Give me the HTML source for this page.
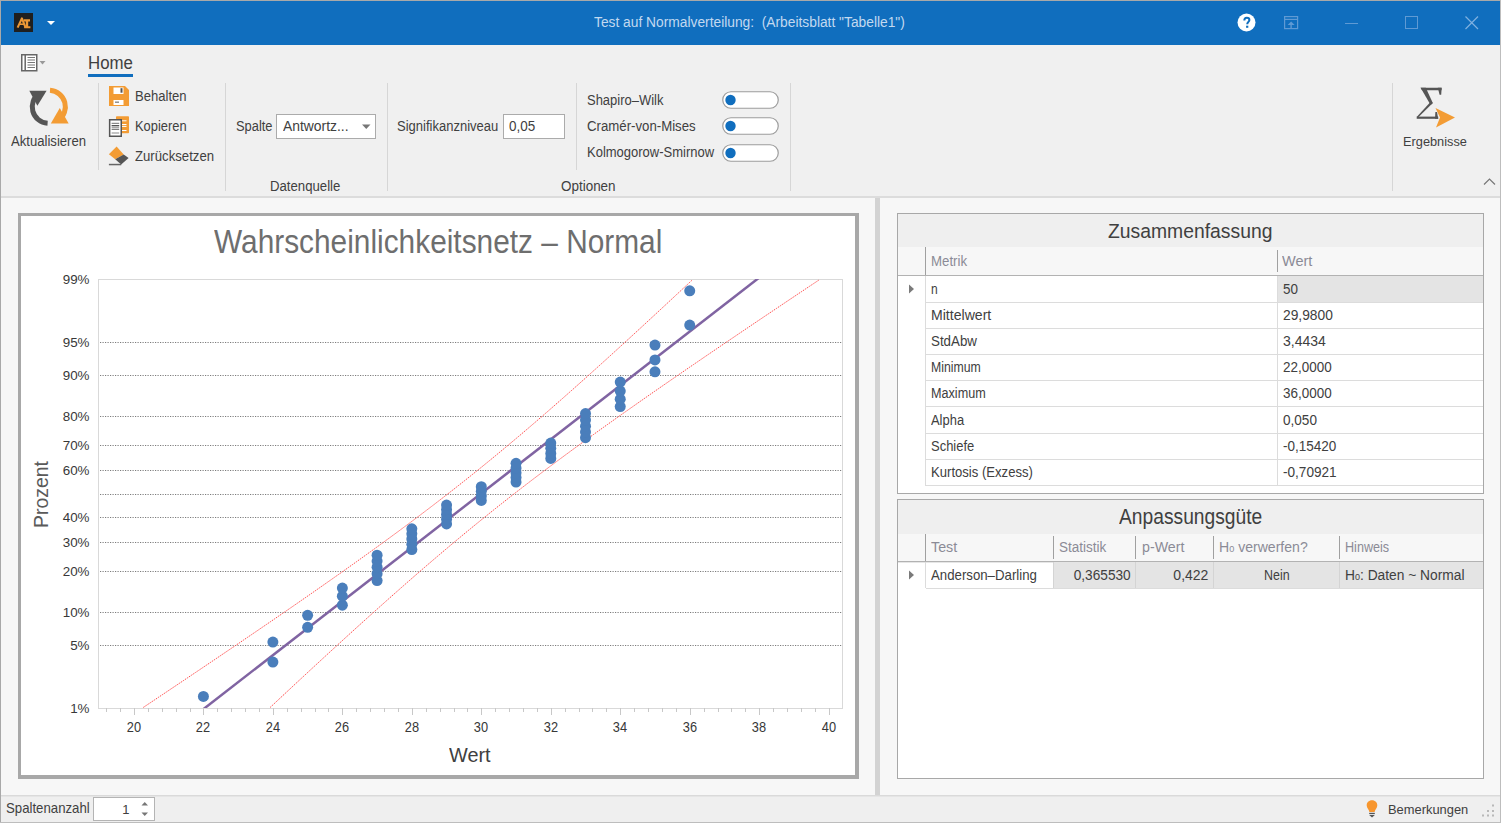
<!DOCTYPE html>
<html><head><meta charset="utf-8"><title>Test auf Normalverteilung</title>
<style>
html,body{margin:0;padding:0;width:1501px;height:823px;overflow:hidden;background:#f7f7f7}
body{position:relative;font-family:"Liberation Sans", sans-serif}
.r{position:absolute;display:block}
.t{position:absolute;white-space:pre;line-height:normal;font-family:"Liberation Sans", sans-serif}
</style></head><body>
<div class="r" style="left:0px;top:0px;width:1501px;height:823px;background:#f7f7f7"></div>
<div class="r" style="left:0px;top:0px;width:1501px;height:45px;background:#106ebe"></div>
<div class="r" style="left:0px;top:0px;width:1501px;height:1px;background:#a9a9a9"></div>
<div class="r" style="left:0px;top:45px;width:1501px;height:151px;background:#f0f0f0"></div>
<div class="r" style="left:0px;top:196px;width:1501px;height:2px;background:#dcdcdc"></div>
<div class="r" style="left:0px;top:795px;width:1501px;height:1px;background:#dadada"></div>
<div class="r" style="left:0px;top:796px;width:1501px;height:1px;background:#e5e5e5"></div>
<div class="r" style="left:0px;top:797px;width:1501px;height:26px;background:#efefef"></div>
<div class="r" style="left:0px;top:0px;width:1px;height:823px;background:#a9a9a9"></div>
<div class="r" style="left:1500px;top:0px;width:1px;height:823px;background:#bdbdbd"></div>
<div class="r" style="left:0px;top:822px;width:1501px;height:1px;background:#bdbdbd"></div>
<svg class="r" style="left:14px;top:13px" width="19" height="19" viewBox="0 0 19 19">
<rect x="0" y="0" width="19" height="19" fill="#1f1f1f"/>
<g fill="none" stroke="#ec9836" stroke-width="2.1" stroke-linejoin="round">
<path d="M3.6 14.6 L7.9 5.4 L11.6 14.6"/>
<path d="M5.4 11.2 H10.2" stroke-width="1.6"/>
<path d="M9.8 7.4 H16 M10.2 14.3 H16.4"/>
<path d="M13 7.4 V14.3" stroke-width="2.4"/>
</g></svg>
<svg class="r" style="left:46px;top:20px" width="10" height="6"><path d="M1 1 H9 L5 5 Z" fill="#fff"/></svg>
<div class="t" style="left:594px;top:14.00px;font-size:14.25px;color:#c2d9f0;transform-origin:0 0;transform:scaleX(0.9671);">Test auf Normalverteilung:&nbsp; (Arbeitsblatt "Tabelle1")</div>
<svg class="r" style="left:1237px;top:13px" width="19" height="19" viewBox="0 0 19 19">
<circle cx="9.5" cy="9.5" r="9" fill="#fff"/>
<path d="M7.3 7.6 C7.3 5.4 8.4 4.7 9.8 4.7 C11.3 4.7 12.4 5.6 12.4 7 C12.4 8.8 10.2 9.1 10.2 11.3" fill="none" stroke="#106ebe" stroke-width="2"/>
<rect x="9.1" y="12.7" width="2.2" height="2.1" fill="#106ebe"/>
</svg>
<svg class="r" style="left:1284px;top:16px" width="16" height="14" viewBox="0 0 16 14">
<g fill="none" stroke="#5f9ad4" stroke-width="1.2">
<rect x="0.6" y="0.6" width="13" height="12"/>
<path d="M0.6 3.4 H13.6"/>
</g>
<path d="M3.6 9 L7.1 5.6 L10.6 9 Z" fill="#5f9ad4"/>
<rect x="6.4" y="8" width="1.4" height="4.4" fill="#5f9ad4"/>
</svg>
<div class="r" style="left:1345px;top:23px;width:13px;height:1px;background:#5f9ad4"></div>
<svg class="r" style="left:1405px;top:16px" width="14" height="14"><rect x="0.5" y="0.5" width="12" height="12" fill="none" stroke="#5f9ad4"/></svg>
<svg class="r" style="left:1464px;top:15px" width="16" height="16"><path d="M1.5 1.5 L14 14 M14 1.5 L1.5 14" stroke="#7fb0e0" stroke-width="1.2"/></svg>
<svg class="r" style="left:20px;top:53px" width="28" height="20" viewBox="0 0 28 20">
<rect x="1.75" y="1.75" width="15" height="16" fill="#fff" stroke="#666" stroke-width="1.5"/>
<path d="M5.2 2 V17.5" stroke="#666" stroke-width="1.5"/>
<path d="M7.5 4.5 H15 M7.5 7 H15 M7.5 9.5 H15 M7.5 12 H15 M7.5 14.5 H15" stroke="#777" stroke-width="1.2"/>
<path d="M19.5 8 H25.5 L22.5 11.5 Z" fill="#999"/>
</svg>
<div class="t" style="left:87.7px;top:53.00px;font-size:17.61px;color:#404040;transform-origin:0 0;transform:scaleX(0.9560);">Home</div>
<div class="r" style="left:88px;top:74px;width:45px;height:3px;background:#106ebe"></div>
<svg class="r" style="left:27px;top:86px" width="44" height="42" viewBox="0 0 44 42">
<path d="M20.6 37.3 A16.5 16.5 0 0 1 12.3 7.3" fill="none" stroke="#555" stroke-width="5"/>
<path d="M2.3 4.7 L19.6 4.7 L10.4 19.8 Z" fill="#555"/>
<path d="M23 4.3 A16.5 16.5 0 0 1 31.3 34.3" fill="none" stroke="#f39c34" stroke-width="5"/>
<path d="M23.8 37.4 L41.7 37.4 L32.8 22 Z" fill="#f39c34"/>
</svg>
<div class="t" style="left:11.1px;top:133.00px;font-size:13.91px;color:#404040;transform-origin:0 0;transform:scaleX(0.9430);">Aktualisieren</div>
<div class="r" style="left:98px;top:83px;width:1px;height:87px;background:#d6d6d6"></div>
<svg class="r" style="left:109px;top:86px" width="20" height="20" viewBox="0 0 20 20">
<path d="M0 0 H16 L20 4 V20 H0 Z" fill="#f39c34"/>
<rect x="4.5" y="1.5" width="10" height="6.5" fill="#fff"/>
<rect x="11.5" y="2.2" width="2" height="4.5" fill="#555"/>
<rect x="4.5" y="14" width="10" height="5" fill="#fff"/>
<rect x="6" y="15.5" width="4" height="1.4" fill="#888"/>
</svg>
<div class="t" style="left:134.8px;top:88.00px;font-size:13.91px;color:#404040;transform-origin:0 0;transform:scaleX(0.9396);">Behalten</div>
<svg class="r" style="left:108px;top:115px" width="22" height="23" viewBox="0 0 22 23">
<rect x="8" y="1.2" width="13" height="17" rx="0.8" fill="#f39c34"/>
<path d="M13.6 5.8 H18.5 M13.6 9.5 H18.5 M13.6 11.4 H18.5 M13.6 15.5 H18.5" stroke="#fff" stroke-width="1"/>
<rect x="1.65" y="4.75" width="11.6" height="16.5" fill="#fff" stroke="#555" stroke-width="1.5"/>
<path d="M3.6 8.4 H11.2 M3.6 12.2 H11.2 M3.6 18 H11.2" stroke="#8a8a8a" stroke-width="1.1"/>
<path d="M3.6 10.6 H11.2 M3.6 14.3 H11.2" stroke="#555" stroke-width="1.1"/>
</svg>
<div class="t" style="left:134.8px;top:118.00px;font-size:13.91px;color:#404040;transform-origin:0 0;transform:scaleX(0.9267);">Kopieren</div>
<svg class="r" style="left:108px;top:145px" width="22" height="21" viewBox="0 0 22 21">
<path d="M8.6 1.5 L0.9 9.3 L7.2 14.2 L15.7 9.6 Z" fill="#f39c34"/>
<path d="M7.2 14.2 L15.7 9.6 L20.6 13.1 L13.2 19.5 Z" fill="#555"/>
<rect x="0.9" y="18.8" width="12.3" height="1.5" fill="#666"/>
</svg>
<div class="t" style="left:134.8px;top:148.00px;font-size:13.91px;color:#404040;transform-origin:0 0;transform:scaleX(0.9474);">Zurücksetzen</div>
<div class="r" style="left:225px;top:83px;width:1px;height:108px;background:#d6d6d6"></div>
<div class="t" style="left:236px;top:118.00px;font-size:13.91px;color:#404040;transform-origin:0 0;transform:scaleX(0.9254);">Spalte</div>
<div class="r" style="left:276px;top:114px;width:100px;height:25px;background:#fff;border:1px solid #ababab;box-sizing:border-box"></div>
<div class="t" style="left:282.7px;top:118.00px;font-size:13.91px;color:#404040;transform-origin:0 0;transform:scaleX(0.9984);">Antwortz...</div>
<svg class="r" style="left:362px;top:124px" width="9" height="6"><path d="M0 0.5 H8.5 L4.25 5 Z" fill="#777"/></svg>
<div class="t" style="left:269.8px;top:178.00px;font-size:13.91px;color:#404040;transform-origin:0 0;transform:scaleX(0.9482);">Datenquelle</div>
<div class="r" style="left:387px;top:83px;width:1px;height:108px;background:#d6d6d6"></div>
<div class="t" style="left:397.4px;top:118.00px;font-size:13.91px;color:#404040;transform-origin:0 0;transform:scaleX(0.9357);">Signifikanzniveau</div>
<div class="r" style="left:503px;top:114px;width:62px;height:25px;background:#fff;border:1px solid #ababab;box-sizing:border-box"></div>
<div class="t" style="left:508.9px;top:118.00px;font-size:13.91px;color:#404040;transform-origin:0 0;transform:scaleX(0.9677);">0,05</div>
<div class="r" style="left:576px;top:83px;width:1px;height:87px;background:#d6d6d6"></div>
<div class="t" style="left:587px;top:92.00px;font-size:13.91px;color:#404040;transform-origin:0 0;transform:scaleX(0.9323);">Shapiro–Wilk</div>
<div class="t" style="left:587px;top:118.00px;font-size:13.91px;color:#404040;transform-origin:0 0;transform:scaleX(0.9503);">Cramér-von-Mises</div>
<div class="t" style="left:587px;top:144.00px;font-size:13.91px;color:#404040;transform-origin:0 0;transform:scaleX(0.9342);">Kolmogorow-Smirnow</div>
<svg class="r" style="left:722px;top:91px" width="57" height="18" viewBox="0 0 57 18">
<rect x="0.75" y="0.75" width="55.5" height="16.5" rx="8.25" fill="#fff" stroke="#9c9c9c" stroke-width="1.2"/>
<circle cx="8.5" cy="9" r="5.2" fill="#106ebe"/></svg>
<svg class="r" style="left:722px;top:117px" width="57" height="18" viewBox="0 0 57 18">
<rect x="0.75" y="0.75" width="55.5" height="16.5" rx="8.25" fill="#fff" stroke="#9c9c9c" stroke-width="1.2"/>
<circle cx="8.5" cy="9" r="5.2" fill="#106ebe"/></svg>
<svg class="r" style="left:722px;top:144px" width="57" height="18" viewBox="0 0 57 18">
<rect x="0.75" y="0.75" width="55.5" height="16.5" rx="8.25" fill="#fff" stroke="#9c9c9c" stroke-width="1.2"/>
<circle cx="8.5" cy="9" r="5.2" fill="#106ebe"/></svg>
<div class="t" style="left:560.6px;top:178.00px;font-size:13.91px;color:#404040;transform-origin:0 0;transform:scaleX(0.9671);">Optionen</div>
<div class="r" style="left:790px;top:83px;width:1px;height:108px;background:#d6d6d6"></div>
<div class="r" style="left:1392px;top:83px;width:1px;height:108px;background:#d6d6d6"></div>
<svg class="r" style="left:1414px;top:86px" width="30" height="36" viewBox="0 0 30 36" fill="#555">
<path d="M6.6 1.8 H27.6 V4.3 H8 Z"/>
<path d="M23.8 1.8 H27.6 L27.2 8.8 H25.6 Z"/>
<path d="M6.6 1.8 H11.8 L18.8 16.9 L16.6 18.9 Z"/>
<path d="M16.9 15.4 L18.8 16.9 L4.6 30.9 H2.7 Z"/>
<path d="M2.7 30.6 H24.2 V32.8 H2.7 Z"/>
<path d="M21.4 26 H23 L24.2 32.8 H21 Z"/>
</svg>
<svg class="r" style="left:1434px;top:107px" width="22" height="21" viewBox="0 0 22 21"><path d="M1.5 1 L21 10.5 L2 20.5 L6 10.5 Z" fill="#f39c34"/></svg>
<div class="t" style="left:1402.8px;top:134.00px;font-size:13.70px;color:#404040;transform-origin:0 0;transform:scaleX(0.9340);">Ergebnisse</div>
<svg class="r" style="left:1483px;top:177px" width="13" height="9"><path d="M1 7.5 L6.5 2 L12 7.5" fill="none" stroke="#777" stroke-width="1.2"/></svg>
<div class="r" style="left:875px;top:198px;width:5px;height:597px;background:#d3d3d3"></div>
<div class="r" style="left:18px;top:213px;width:841px;height:566px;background:#fff;border:3px solid #a8a8a8;border-right-width:4px;border-bottom-width:4px;box-sizing:border-box"></div>
<div class="t" style="left:213.6px;top:224.00px;font-size:32.41px;color:#6e6e6e;transform-origin:0 0;transform:scaleX(0.9208);">Wahrscheinlichkeitsnetz – Normal</div>
<svg class="r" style="left:0;top:0" width="1501" height="823"><clipPath id="pc"><rect x="98" y="279" width="744" height="429"/></clipPath><rect x="98.5" y="279.5" width="744" height="429" fill="none" stroke="#d9d9d9" stroke-width="1"/><line x1="100" y1="342.5" x2="842" y2="342.5" stroke="#7c7c7c" stroke-width="1" stroke-dasharray="1.2 1.3"/><line x1="100" y1="375.5" x2="842" y2="375.5" stroke="#7c7c7c" stroke-width="1" stroke-dasharray="1.2 1.3"/><line x1="100" y1="416.5" x2="842" y2="416.5" stroke="#7c7c7c" stroke-width="1" stroke-dasharray="1.2 1.3"/><line x1="100" y1="445.5" x2="842" y2="445.5" stroke="#7c7c7c" stroke-width="1" stroke-dasharray="1.2 1.3"/><line x1="100" y1="470.5" x2="842" y2="470.5" stroke="#7c7c7c" stroke-width="1" stroke-dasharray="1.2 1.3"/><line x1="100" y1="494.5" x2="842" y2="494.5" stroke="#7c7c7c" stroke-width="1" stroke-dasharray="1.2 1.3"/><line x1="100" y1="517.5" x2="842" y2="517.5" stroke="#7c7c7c" stroke-width="1" stroke-dasharray="1.2 1.3"/><line x1="100" y1="542.5" x2="842" y2="542.5" stroke="#7c7c7c" stroke-width="1" stroke-dasharray="1.2 1.3"/><line x1="100" y1="571.5" x2="842" y2="571.5" stroke="#7c7c7c" stroke-width="1" stroke-dasharray="1.2 1.3"/><line x1="100" y1="612.5" x2="842" y2="612.5" stroke="#7c7c7c" stroke-width="1" stroke-dasharray="1.2 1.3"/><line x1="100" y1="645.5" x2="842" y2="645.5" stroke="#7c7c7c" stroke-width="1" stroke-dasharray="1.2 1.3"/><line x1="106.5" y1="708" x2="106.5" y2="712" stroke="#c8c8c8" stroke-width="1"/><line x1="120.5" y1="708" x2="120.5" y2="712" stroke="#c8c8c8" stroke-width="1"/><line x1="134.5" y1="708" x2="134.5" y2="715" stroke="#c8c8c8" stroke-width="1"/><line x1="148.5" y1="708" x2="148.5" y2="712" stroke="#c8c8c8" stroke-width="1"/><line x1="162.5" y1="708" x2="162.5" y2="712" stroke="#c8c8c8" stroke-width="1"/><line x1="176.5" y1="708" x2="176.5" y2="712" stroke="#c8c8c8" stroke-width="1"/><line x1="190.5" y1="708" x2="190.5" y2="712" stroke="#c8c8c8" stroke-width="1"/><line x1="203.5" y1="708" x2="203.5" y2="715" stroke="#c8c8c8" stroke-width="1"/><line x1="217.5" y1="708" x2="217.5" y2="712" stroke="#c8c8c8" stroke-width="1"/><line x1="231.5" y1="708" x2="231.5" y2="712" stroke="#c8c8c8" stroke-width="1"/><line x1="245.5" y1="708" x2="245.5" y2="712" stroke="#c8c8c8" stroke-width="1"/><line x1="259.5" y1="708" x2="259.5" y2="712" stroke="#c8c8c8" stroke-width="1"/><line x1="273.5" y1="708" x2="273.5" y2="715" stroke="#c8c8c8" stroke-width="1"/><line x1="287.5" y1="708" x2="287.5" y2="712" stroke="#c8c8c8" stroke-width="1"/><line x1="301.5" y1="708" x2="301.5" y2="712" stroke="#c8c8c8" stroke-width="1"/><line x1="315.5" y1="708" x2="315.5" y2="712" stroke="#c8c8c8" stroke-width="1"/><line x1="328.5" y1="708" x2="328.5" y2="712" stroke="#c8c8c8" stroke-width="1"/><line x1="342.5" y1="708" x2="342.5" y2="715" stroke="#c8c8c8" stroke-width="1"/><line x1="356.5" y1="708" x2="356.5" y2="712" stroke="#c8c8c8" stroke-width="1"/><line x1="370.5" y1="708" x2="370.5" y2="712" stroke="#c8c8c8" stroke-width="1"/><line x1="384.5" y1="708" x2="384.5" y2="712" stroke="#c8c8c8" stroke-width="1"/><line x1="398.5" y1="708" x2="398.5" y2="712" stroke="#c8c8c8" stroke-width="1"/><line x1="412.5" y1="708" x2="412.5" y2="715" stroke="#c8c8c8" stroke-width="1"/><line x1="426.5" y1="708" x2="426.5" y2="712" stroke="#c8c8c8" stroke-width="1"/><line x1="440.5" y1="708" x2="440.5" y2="712" stroke="#c8c8c8" stroke-width="1"/><line x1="454.5" y1="708" x2="454.5" y2="712" stroke="#c8c8c8" stroke-width="1"/><line x1="467.5" y1="708" x2="467.5" y2="712" stroke="#c8c8c8" stroke-width="1"/><line x1="481.5" y1="708" x2="481.5" y2="715" stroke="#c8c8c8" stroke-width="1"/><line x1="495.5" y1="708" x2="495.5" y2="712" stroke="#c8c8c8" stroke-width="1"/><line x1="509.5" y1="708" x2="509.5" y2="712" stroke="#c8c8c8" stroke-width="1"/><line x1="523.5" y1="708" x2="523.5" y2="712" stroke="#c8c8c8" stroke-width="1"/><line x1="537.5" y1="708" x2="537.5" y2="712" stroke="#c8c8c8" stroke-width="1"/><line x1="551.5" y1="708" x2="551.5" y2="715" stroke="#c8c8c8" stroke-width="1"/><line x1="565.5" y1="708" x2="565.5" y2="712" stroke="#c8c8c8" stroke-width="1"/><line x1="579.5" y1="708" x2="579.5" y2="712" stroke="#c8c8c8" stroke-width="1"/><line x1="592.5" y1="708" x2="592.5" y2="712" stroke="#c8c8c8" stroke-width="1"/><line x1="606.5" y1="708" x2="606.5" y2="712" stroke="#c8c8c8" stroke-width="1"/><line x1="620.5" y1="708" x2="620.5" y2="715" stroke="#c8c8c8" stroke-width="1"/><line x1="634.5" y1="708" x2="634.5" y2="712" stroke="#c8c8c8" stroke-width="1"/><line x1="648.5" y1="708" x2="648.5" y2="712" stroke="#c8c8c8" stroke-width="1"/><line x1="662.5" y1="708" x2="662.5" y2="712" stroke="#c8c8c8" stroke-width="1"/><line x1="676.5" y1="708" x2="676.5" y2="712" stroke="#c8c8c8" stroke-width="1"/><line x1="690.5" y1="708" x2="690.5" y2="715" stroke="#c8c8c8" stroke-width="1"/><line x1="704.5" y1="708" x2="704.5" y2="712" stroke="#c8c8c8" stroke-width="1"/><line x1="718.5" y1="708" x2="718.5" y2="712" stroke="#c8c8c8" stroke-width="1"/><line x1="731.5" y1="708" x2="731.5" y2="712" stroke="#c8c8c8" stroke-width="1"/><line x1="745.5" y1="708" x2="745.5" y2="712" stroke="#c8c8c8" stroke-width="1"/><line x1="759.5" y1="708" x2="759.5" y2="715" stroke="#c8c8c8" stroke-width="1"/><line x1="773.5" y1="708" x2="773.5" y2="712" stroke="#c8c8c8" stroke-width="1"/><line x1="787.5" y1="708" x2="787.5" y2="712" stroke="#c8c8c8" stroke-width="1"/><line x1="801.5" y1="708" x2="801.5" y2="712" stroke="#c8c8c8" stroke-width="1"/><line x1="815.5" y1="708" x2="815.5" y2="712" stroke="#c8c8c8" stroke-width="1"/><line x1="829.5" y1="708" x2="829.5" y2="715" stroke="#c8c8c8" stroke-width="1"/><path d="M143.32 707.41 L144.71 706.49 L146.09 705.57 L147.47 704.65 L148.85 703.72 L150.23 702.80 L151.61 701.88 L152.99 700.96 L154.38 700.04 L155.76 699.12 L157.14 698.20 L158.51 697.27 L159.89 696.35 L161.27 695.43 L162.65 694.51 L164.03 693.59 L165.41 692.67 L166.79 691.74 L168.17 690.82 L169.54 689.90 L170.92 688.98 L172.30 688.06 L173.67 687.14 L175.05 686.21 L176.43 685.29 L177.80 684.37 L179.18 683.45 L180.55 682.53 L181.93 681.61 L183.30 680.68 L184.68 679.76 L186.05 678.84 L187.42 677.92 L188.80 677.00 L190.17 676.08 L191.54 675.16 L192.92 674.23 L194.29 673.31 L195.66 672.39 L197.03 671.47 L198.40 670.55 L199.77 669.63 L201.14 668.70 L202.51 667.78 L203.88 666.86 L205.25 665.94 L206.62 665.02 L207.99 664.10 L209.36 663.17 L210.73 662.25 L212.09 661.33 L213.46 660.41 L214.83 659.49 L216.19 658.57 L217.56 657.64 L218.93 656.72 L220.29 655.80 L221.65 654.88 L223.02 653.96 L224.38 653.04 L225.75 652.12 L227.11 651.19 L228.47 650.27 L229.83 649.35 L231.20 648.43 L232.56 647.51 L233.92 646.59 L235.28 645.66 L236.64 644.74 L238.00 643.82 L239.36 642.90 L240.72 641.98 L242.07 641.06 L243.43 640.13 L244.79 639.21 L246.14 638.29 L247.50 637.37 L248.86 636.45 L250.21 635.53 L251.57 634.60 L252.92 633.68 L254.27 632.76 L255.63 631.84 L256.98 630.92 L258.33 630.00 L259.68 629.08 L261.03 628.15 L262.38 627.23 L263.73 626.31 L265.08 625.39 L266.43 624.47 L267.78 623.55 L269.13 622.62 L270.47 621.70 L271.82 620.78 L273.17 619.86 L274.51 618.94 L275.85 618.02 L277.20 617.09 L278.54 616.17 L279.88 615.25 L281.23 614.33 L282.57 613.41 L283.91 612.49 L285.25 611.56 L286.59 610.64 L287.93 609.72 L289.26 608.80 L290.60 607.88 L291.94 606.96 L293.27 606.04 L294.61 605.11 L295.94 604.19 L297.27 603.27 L298.61 602.35 L299.94 601.43 L301.27 600.51 L302.60 599.58 L303.93 598.66 L305.26 597.74 L306.59 596.82 L307.92 595.90 L309.24 594.98 L310.57 594.05 L311.89 593.13 L313.22 592.21 L314.54 591.29 L315.86 590.37 L317.19 589.45 L318.51 588.52 L319.83 587.60 L321.14 586.68 L322.46 585.76 L323.78 584.84 L325.10 583.92 L326.41 583.00 L327.73 582.07 L329.04 581.15 L330.35 580.23 L331.66 579.31 L332.97 578.39 L334.28 577.47 L335.59 576.54 L336.90 575.62 L338.21 574.70 L339.51 573.78 L340.82 572.86 L342.12 571.94 L343.42 571.01 L344.73 570.09 L346.03 569.17 L347.33 568.25 L348.62 567.33 L349.92 566.41 L351.22 565.48 L352.51 564.56 L353.81 563.64 L355.10 562.72 L356.39 561.80 L357.68 560.88 L358.97 559.96 L360.26 559.03 L361.55 558.11 L362.83 557.19 L364.12 556.27 L365.40 555.35 L366.68 554.43 L367.96 553.50 L369.24 552.58 L370.52 551.66 L371.80 550.74 L373.08 549.82 L374.35 548.90 L375.62 547.97 L376.90 547.05 L378.17 546.13 L379.44 545.21 L380.71 544.29 L381.97 543.37 L383.24 542.44 L384.50 541.52 L385.77 540.60 L387.03 539.68 L388.29 538.76 L389.55 537.84 L390.80 536.92 L392.06 535.99 L393.31 535.07 L394.57 534.15 L395.82 533.23 L397.07 532.31 L398.32 531.39 L399.57 530.46 L400.81 529.54 L402.06 528.62 L403.30 527.70 L404.54 526.78 L405.78 525.86 L407.02 524.93 L408.26 524.01 L409.49 523.09 L410.72 522.17 L411.96 521.25 L413.19 520.33 L414.42 519.40 L415.64 518.48 L416.87 517.56 L418.10 516.64 L419.32 515.72 L420.54 514.80 L421.76 513.88 L422.98 512.95 L424.20 512.03 L425.41 511.11 L426.62 510.19 L427.84 509.27 L429.05 508.35 L430.25 507.42 L431.46 506.50 L432.67 505.58 L433.87 504.66 L435.07 503.74 L436.27 502.82 L437.47 501.89 L438.67 500.97 L439.87 500.05 L441.06 499.13 L442.25 498.21 L443.44 497.29 L444.63 496.36 L445.82 495.44 L447.01 494.52 L448.19 493.60 L449.37 492.68 L450.55 491.76 L451.73 490.84 L452.91 489.91 L454.09 488.99 L455.26 488.07 L456.43 487.15 L457.60 486.23 L458.77 485.31 L459.94 484.38 L461.11 483.46 L462.27 482.54 L463.44 481.62 L464.60 480.70 L465.76 479.78 L466.91 478.85 L468.07 477.93 L469.23 477.01 L470.38 476.09 L471.53 475.17 L472.68 474.25 L473.83 473.32 L474.98 472.40 L476.12 471.48 L477.27 470.56 L478.41 469.64 L479.55 468.72 L480.69 467.80 L481.83 466.87 L482.96 465.95 L484.10 465.03 L485.23 464.11 L486.36 463.19 L487.49 462.27 L488.62 461.34 L489.74 460.42 L490.87 459.50 L491.99 458.58 L493.12 457.66 L494.24 456.74 L495.36 455.81 L496.47 454.89 L497.59 453.97 L498.71 453.05 L499.82 452.13 L500.93 451.21 L502.04 450.28 L503.15 449.36 L504.26 448.44 L505.37 447.52 L506.47 446.60 L507.58 445.68 L508.68 444.76 L509.78 443.83 L510.88 442.91 L511.98 441.99 L513.08 441.07 L514.17 440.15 L515.27 439.23 L516.36 438.30 L517.45 437.38 L518.54 436.46 L519.63 435.54 L520.72 434.62 L521.81 433.70 L522.89 432.77 L523.98 431.85 L525.06 430.93 L526.14 430.01 L527.22 429.09 L528.30 428.17 L529.38 427.24 L530.46 426.32 L531.53 425.40 L532.61 424.48 L533.68 423.56 L534.76 422.64 L535.83 421.72 L536.90 420.79 L537.97 419.87 L539.04 418.95 L540.10 418.03 L541.17 417.11 L542.24 416.19 L543.30 415.26 L544.36 414.34 L545.42 413.42 L546.49 412.50 L547.55 411.58 L548.61 410.66 L549.66 409.73 L550.72 408.81 L551.78 407.89 L552.83 406.97 L553.89 406.05 L554.94 405.13 L555.99 404.20 L557.04 403.28 L558.09 402.36 L559.14 401.44 L560.19 400.52 L561.24 399.60 L562.29 398.68 L563.33 397.75 L564.38 396.83 L565.42 395.91 L566.47 394.99 L567.51 394.07 L568.55 393.15 L569.59 392.22 L570.63 391.30 L571.67 390.38 L572.71 389.46 L573.75 388.54 L574.78 387.62 L575.82 386.69 L576.86 385.77 L577.89 384.85 L578.92 383.93 L579.96 383.01 L580.99 382.09 L582.02 381.16 L583.05 380.24 L584.08 379.32 L585.11 378.40 L586.14 377.48 L587.17 376.56 L588.20 375.64 L589.22 374.71 L590.25 373.79 L591.28 372.87 L592.30 371.95 L593.33 371.03 L594.35 370.11 L595.37 369.18 L596.39 368.26 L597.42 367.34 L598.44 366.42 L599.46 365.50 L600.48 364.58 L601.50 363.65 L602.52 362.73 L603.53 361.81 L604.55 360.89 L605.57 359.97 L606.59 359.05 L607.60 358.12 L608.62 357.20 L609.63 356.28 L610.65 355.36 L611.66 354.44 L612.67 353.52 L613.69 352.60 L614.70 351.67 L615.71 350.75 L616.72 349.83 L617.73 348.91 L618.74 347.99 L619.75 347.07 L620.76 346.14 L621.77 345.22 L622.78 344.30 L623.79 343.38 L624.79 342.46 L625.80 341.54 L626.81 340.61 L627.81 339.69 L628.82 338.77 L629.82 337.85 L630.83 336.93 L631.83 336.01 L632.84 335.08 L633.84 334.16 L634.84 333.24 L635.84 332.32 L636.85 331.40 L637.85 330.48 L638.85 329.56 L639.85 328.63 L640.85 327.71 L641.85 326.79 L642.85 325.87 L643.85 324.95 L644.85 324.03 L645.85 323.10 L646.85 322.18 L647.84 321.26 L648.84 320.34 L649.84 319.42 L650.84 318.50 L651.83 317.57 L652.83 316.65 L653.82 315.73 L654.82 314.81 L655.81 313.89 L656.81 312.97 L657.80 312.04 L658.80 311.12 L659.79 310.20 L660.78 309.28 L661.78 308.36 L662.77 307.44 L663.76 306.52 L664.76 305.59 L665.75 304.67 L666.74 303.75 L667.73 302.83 L668.72 301.91 L669.71 300.99 L670.70 300.06 L671.69 299.14 L672.68 298.22 L673.67 297.30 L674.66 296.38 L675.65 295.46 L676.64 294.53 L677.63 293.61 L678.61 292.69 L679.60 291.77 L680.59 290.85 L681.58 289.93 L682.56 289.00 L683.55 288.08 L684.54 287.16 L685.52 286.24 L686.51 285.32 L687.50 284.40 L688.48 283.48 L689.47 282.55 L690.45 281.63 L691.44 280.71 L692.42 279.79" fill="none" stroke="#ff4a4a" stroke-width="1" stroke-dasharray="1.5 1"/><path d="M270.18 707.41 L271.16 706.49 L272.15 705.57 L273.13 704.65 L274.12 703.72 L275.10 702.80 L276.09 701.88 L277.08 700.96 L278.06 700.04 L279.05 699.12 L280.04 698.20 L281.02 697.27 L282.01 696.35 L283.00 695.43 L283.99 694.51 L284.97 693.59 L285.96 692.67 L286.95 691.74 L287.94 690.82 L288.93 689.90 L289.92 688.98 L290.91 688.06 L291.90 687.14 L292.89 686.21 L293.88 685.29 L294.87 684.37 L295.86 683.45 L296.85 682.53 L297.84 681.61 L298.84 680.68 L299.83 679.76 L300.82 678.84 L301.82 677.92 L302.81 677.00 L303.80 676.08 L304.80 675.16 L305.79 674.23 L306.79 673.31 L307.78 672.39 L308.78 671.47 L309.77 670.55 L310.77 669.63 L311.76 668.70 L312.76 667.78 L313.76 666.86 L314.76 665.94 L315.75 665.02 L316.75 664.10 L317.75 663.17 L318.75 662.25 L319.75 661.33 L320.75 660.41 L321.75 659.49 L322.75 658.57 L323.75 657.64 L324.75 656.72 L325.75 655.80 L326.76 654.88 L327.76 653.96 L328.76 653.04 L329.76 652.12 L330.77 651.19 L331.77 650.27 L332.78 649.35 L333.78 648.43 L334.79 647.51 L335.79 646.59 L336.80 645.66 L337.81 644.74 L338.81 643.82 L339.82 642.90 L340.83 641.98 L341.84 641.06 L342.85 640.13 L343.86 639.21 L344.87 638.29 L345.88 637.37 L346.89 636.45 L347.90 635.53 L348.91 634.60 L349.93 633.68 L350.94 632.76 L351.95 631.84 L352.97 630.92 L353.98 630.00 L355.00 629.08 L356.01 628.15 L357.03 627.23 L358.05 626.31 L359.07 625.39 L360.08 624.47 L361.10 623.55 L362.12 622.62 L363.14 621.70 L364.16 620.78 L365.18 619.86 L366.21 618.94 L367.23 618.02 L368.25 617.09 L369.27 616.17 L370.30 615.25 L371.32 614.33 L372.35 613.41 L373.38 612.49 L374.40 611.56 L375.43 610.64 L376.46 609.72 L377.49 608.80 L378.52 607.88 L379.55 606.96 L380.58 606.04 L381.61 605.11 L382.64 604.19 L383.68 603.27 L384.71 602.35 L385.74 601.43 L386.78 600.51 L387.82 599.58 L388.85 598.66 L389.89 597.74 L390.93 596.82 L391.97 595.90 L393.01 594.98 L394.05 594.05 L395.09 593.13 L396.13 592.21 L397.18 591.29 L398.22 590.37 L399.27 589.45 L400.31 588.52 L401.36 587.60 L402.41 586.68 L403.46 585.76 L404.51 584.84 L405.56 583.92 L406.61 583.00 L407.66 582.07 L408.71 581.15 L409.77 580.23 L410.82 579.31 L411.88 578.39 L412.94 577.47 L413.99 576.54 L415.05 575.62 L416.11 574.70 L417.18 573.78 L418.24 572.86 L419.30 571.94 L420.36 571.01 L421.43 570.09 L422.50 569.17 L423.56 568.25 L424.63 567.33 L425.70 566.41 L426.77 565.48 L427.84 564.56 L428.92 563.64 L429.99 562.72 L431.07 561.80 L432.14 560.88 L433.22 559.96 L434.30 559.03 L435.38 558.11 L436.46 557.19 L437.54 556.27 L438.62 555.35 L439.71 554.43 L440.79 553.50 L441.88 552.58 L442.97 551.66 L444.06 550.74 L445.15 549.82 L446.24 548.90 L447.33 547.97 L448.43 547.05 L449.52 546.13 L450.62 545.21 L451.72 544.29 L452.82 543.37 L453.92 542.44 L455.02 541.52 L456.13 540.60 L457.23 539.68 L458.34 538.76 L459.45 537.84 L460.56 536.92 L461.67 535.99 L462.78 535.07 L463.89 534.15 L465.01 533.23 L466.13 532.31 L467.24 531.39 L468.36 530.46 L469.48 529.54 L470.61 528.62 L471.73 527.70 L472.86 526.78 L473.98 525.86 L475.11 524.93 L476.24 524.01 L477.37 523.09 L478.50 522.17 L479.64 521.25 L480.77 520.33 L481.91 519.40 L483.05 518.48 L484.19 517.56 L485.33 516.64 L486.48 515.72 L487.62 514.80 L488.77 513.88 L489.92 512.95 L491.07 512.03 L492.22 511.11 L493.37 510.19 L494.53 509.27 L495.69 508.35 L496.84 507.42 L498.00 506.50 L499.16 505.58 L500.33 504.66 L501.49 503.74 L502.66 502.82 L503.83 501.89 L505.00 500.97 L506.17 500.05 L507.34 499.13 L508.51 498.21 L509.69 497.29 L510.87 496.36 L512.05 495.44 L513.23 494.52 L514.41 493.60 L515.59 492.68 L516.78 491.76 L517.97 490.84 L519.16 489.91 L520.35 488.99 L521.54 488.07 L522.73 487.15 L523.93 486.23 L525.13 485.31 L526.33 484.38 L527.53 483.46 L528.73 482.54 L529.93 481.62 L531.14 480.70 L532.35 479.78 L533.55 478.85 L534.76 477.93 L535.98 477.01 L537.19 476.09 L538.40 475.17 L539.62 474.25 L540.84 473.32 L542.06 472.40 L543.28 471.48 L544.50 470.56 L545.73 469.64 L546.96 468.72 L548.18 467.80 L549.41 466.87 L550.64 465.95 L551.88 465.03 L553.11 464.11 L554.34 463.19 L555.58 462.27 L556.82 461.34 L558.06 460.42 L559.30 459.50 L560.54 458.58 L561.79 457.66 L563.03 456.74 L564.28 455.81 L565.53 454.89 L566.78 453.97 L568.03 453.05 L569.29 452.13 L570.54 451.21 L571.80 450.28 L573.05 449.36 L574.31 448.44 L575.57 447.52 L576.83 446.60 L578.10 445.68 L579.36 444.76 L580.63 443.83 L581.89 442.91 L583.16 441.99 L584.43 441.07 L585.70 440.15 L586.98 439.23 L588.25 438.30 L589.52 437.38 L590.80 436.46 L592.08 435.54 L593.36 434.62 L594.64 433.70 L595.92 432.77 L597.20 431.85 L598.48 430.93 L599.77 430.01 L601.05 429.09 L602.34 428.17 L603.63 427.24 L604.92 426.32 L606.21 425.40 L607.50 424.48 L608.79 423.56 L610.09 422.64 L611.38 421.72 L612.68 420.79 L613.98 419.87 L615.27 418.95 L616.57 418.03 L617.87 417.11 L619.18 416.19 L620.48 415.26 L621.78 414.34 L623.09 413.42 L624.39 412.50 L625.70 411.58 L627.01 410.66 L628.32 409.73 L629.63 408.81 L630.94 407.89 L632.25 406.97 L633.56 406.05 L634.87 405.13 L636.19 404.20 L637.50 403.28 L638.82 402.36 L640.14 401.44 L641.46 400.52 L642.77 399.60 L644.09 398.68 L645.41 397.75 L646.74 396.83 L648.06 395.91 L649.38 394.99 L650.71 394.07 L652.03 393.15 L653.36 392.22 L654.68 391.30 L656.01 390.38 L657.34 389.46 L658.67 388.54 L660.00 387.62 L661.33 386.69 L662.66 385.77 L663.99 384.85 L665.33 383.93 L666.66 383.01 L667.99 382.09 L669.33 381.16 L670.66 380.24 L672.00 379.32 L673.34 378.40 L674.67 377.48 L676.01 376.56 L677.35 375.64 L678.69 374.71 L680.03 373.79 L681.37 372.87 L682.72 371.95 L684.06 371.03 L685.40 370.11 L686.75 369.18 L688.09 368.26 L689.43 367.34 L690.78 366.42 L692.13 365.50 L693.47 364.58 L694.82 363.65 L696.17 362.73 L697.52 361.81 L698.87 360.89 L700.22 359.97 L701.57 359.05 L702.92 358.12 L704.27 357.20 L705.62 356.28 L706.97 355.36 L708.33 354.44 L709.68 353.52 L711.03 352.60 L712.39 351.67 L713.74 350.75 L715.10 349.83 L716.46 348.91 L717.81 347.99 L719.17 347.07 L720.53 346.14 L721.88 345.22 L723.24 344.30 L724.60 343.38 L725.96 342.46 L727.32 341.54 L728.68 340.61 L730.04 339.69 L731.40 338.77 L732.77 337.85 L734.13 336.93 L735.49 336.01 L736.85 335.08 L738.22 334.16 L739.58 333.24 L740.95 332.32 L742.31 331.40 L743.67 330.48 L745.04 329.56 L746.41 328.63 L747.77 327.71 L749.14 326.79 L750.51 325.87 L751.87 324.95 L753.24 324.03 L754.61 323.10 L755.98 322.18 L757.35 321.26 L758.72 320.34 L760.09 319.42 L761.46 318.50 L762.83 317.57 L764.20 316.65 L765.57 315.73 L766.94 314.81 L768.31 313.89 L769.68 312.97 L771.06 312.04 L772.43 311.12 L773.80 310.20 L775.18 309.28 L776.55 308.36 L777.92 307.44 L779.30 306.52 L780.67 305.59 L782.05 304.67 L783.42 303.75 L784.80 302.83 L786.17 301.91 L787.55 300.99 L788.93 300.06 L790.30 299.14 L791.68 298.22 L793.06 297.30 L794.43 296.38 L795.81 295.46 L797.19 294.53 L798.57 293.61 L799.95 292.69 L801.33 291.77 L802.71 290.85 L804.09 289.93 L805.46 289.00 L806.84 288.08 L808.22 287.16 L809.61 286.24 L810.99 285.32 L812.37 284.40 L813.75 283.48 L815.13 282.55 L816.51 281.63 L817.89 280.71 L819.28 279.79" fill="none" stroke="#ff4a4a" stroke-width="1" stroke-dasharray="1.5 1"/><line x1="196.12" y1="714.78" x2="765.88" y2="272.42" stroke="#8064a2" stroke-width="2.5" clip-path="url(#pc)"/><circle cx="203.41" cy="696.39" r="5.5" fill="#4a7ebb"/><circle cx="272.88" cy="662.12" r="5.5" fill="#4a7ebb"/><circle cx="272.88" cy="642.09" r="5.5" fill="#4a7ebb"/><circle cx="307.62" cy="627.31" r="5.5" fill="#4a7ebb"/><circle cx="307.62" cy="615.34" r="5.5" fill="#4a7ebb"/><circle cx="342.36" cy="605.13" r="5.5" fill="#4a7ebb"/><circle cx="342.36" cy="596.14" r="5.5" fill="#4a7ebb"/><circle cx="342.36" cy="588.03" r="5.5" fill="#4a7ebb"/><circle cx="377.09" cy="580.59" r="5.5" fill="#4a7ebb"/><circle cx="377.09" cy="573.67" r="5.5" fill="#4a7ebb"/><circle cx="377.09" cy="567.19" r="5.5" fill="#4a7ebb"/><circle cx="377.09" cy="561.04" r="5.5" fill="#4a7ebb"/><circle cx="377.09" cy="555.19" r="5.5" fill="#4a7ebb"/><circle cx="411.83" cy="549.57" r="5.5" fill="#4a7ebb"/><circle cx="411.83" cy="544.15" r="5.5" fill="#4a7ebb"/><circle cx="411.83" cy="538.90" r="5.5" fill="#4a7ebb"/><circle cx="411.83" cy="533.80" r="5.5" fill="#4a7ebb"/><circle cx="411.83" cy="528.82" r="5.5" fill="#4a7ebb"/><circle cx="446.56" cy="523.93" r="5.5" fill="#4a7ebb"/><circle cx="446.56" cy="519.13" r="5.5" fill="#4a7ebb"/><circle cx="446.56" cy="514.40" r="5.5" fill="#4a7ebb"/><circle cx="446.56" cy="509.72" r="5.5" fill="#4a7ebb"/><circle cx="446.56" cy="505.09" r="5.5" fill="#4a7ebb"/><circle cx="481.30" cy="500.48" r="5.5" fill="#4a7ebb"/><circle cx="481.30" cy="495.89" r="5.5" fill="#4a7ebb"/><circle cx="481.30" cy="491.31" r="5.5" fill="#4a7ebb"/><circle cx="481.30" cy="486.72" r="5.5" fill="#4a7ebb"/><circle cx="516.04" cy="482.11" r="5.5" fill="#4a7ebb"/><circle cx="516.04" cy="477.48" r="5.5" fill="#4a7ebb"/><circle cx="516.04" cy="472.80" r="5.5" fill="#4a7ebb"/><circle cx="516.04" cy="468.07" r="5.5" fill="#4a7ebb"/><circle cx="516.04" cy="463.27" r="5.5" fill="#4a7ebb"/><circle cx="550.77" cy="458.38" r="5.5" fill="#4a7ebb"/><circle cx="550.77" cy="453.40" r="5.5" fill="#4a7ebb"/><circle cx="550.77" cy="448.30" r="5.5" fill="#4a7ebb"/><circle cx="550.77" cy="443.05" r="5.5" fill="#4a7ebb"/><circle cx="585.51" cy="437.63" r="5.5" fill="#4a7ebb"/><circle cx="585.51" cy="432.01" r="5.5" fill="#4a7ebb"/><circle cx="585.51" cy="426.16" r="5.5" fill="#4a7ebb"/><circle cx="585.51" cy="420.01" r="5.5" fill="#4a7ebb"/><circle cx="585.51" cy="413.53" r="5.5" fill="#4a7ebb"/><circle cx="620.24" cy="406.61" r="5.5" fill="#4a7ebb"/><circle cx="620.24" cy="399.17" r="5.5" fill="#4a7ebb"/><circle cx="620.24" cy="391.06" r="5.5" fill="#4a7ebb"/><circle cx="620.24" cy="382.07" r="5.5" fill="#4a7ebb"/><circle cx="654.98" cy="371.86" r="5.5" fill="#4a7ebb"/><circle cx="654.98" cy="359.89" r="5.5" fill="#4a7ebb"/><circle cx="654.98" cy="345.11" r="5.5" fill="#4a7ebb"/><circle cx="689.72" cy="325.08" r="5.5" fill="#4a7ebb"/><circle cx="689.72" cy="290.81" r="5.5" fill="#4a7ebb"/></svg>
<div class="t" style="right:1411.5px;top:272.00px;font-size:13.40px;color:#383838;transform-origin:100% 0;">99%</div>
<div class="t" style="right:1411.5px;top:335.00px;font-size:13.40px;color:#383838;transform-origin:100% 0;">95%</div>
<div class="t" style="right:1411.5px;top:368.00px;font-size:13.40px;color:#383838;transform-origin:100% 0;">90%</div>
<div class="t" style="right:1411.5px;top:409.00px;font-size:13.40px;color:#383838;transform-origin:100% 0;">80%</div>
<div class="t" style="right:1411.5px;top:438.00px;font-size:13.40px;color:#383838;transform-origin:100% 0;">70%</div>
<div class="t" style="right:1411.5px;top:463.00px;font-size:13.40px;color:#383838;transform-origin:100% 0;">60%</div>
<div class="t" style="right:1411.5px;top:510.00px;font-size:13.40px;color:#383838;transform-origin:100% 0;">40%</div>
<div class="t" style="right:1411.5px;top:535.00px;font-size:13.40px;color:#383838;transform-origin:100% 0;">30%</div>
<div class="t" style="right:1411.5px;top:564.00px;font-size:13.40px;color:#383838;transform-origin:100% 0;">20%</div>
<div class="t" style="right:1411.5px;top:605.00px;font-size:13.40px;color:#383838;transform-origin:100% 0;">10%</div>
<div class="t" style="right:1411.5px;top:638.00px;font-size:13.40px;color:#383838;transform-origin:100% 0;">5%</div>
<div class="t" style="right:1411.5px;top:701.00px;font-size:13.40px;color:#383838;transform-origin:100% 0;">1%</div>
<div class="t" style="left:-366.05999999999995px;width:1000px;text-align:center;top:720.00px;font-size:13.80px;color:#383838;transform-origin:50% 0;transform:scaleX(0.9276);">20</div>
<div class="t" style="left:-296.58799999999997px;width:1000px;text-align:center;top:720.00px;font-size:13.80px;color:#383838;transform-origin:50% 0;transform:scaleX(0.9276);">22</div>
<div class="t" style="left:-227.11599999999999px;width:1000px;text-align:center;top:720.00px;font-size:13.80px;color:#383838;transform-origin:50% 0;transform:scaleX(0.9276);">24</div>
<div class="t" style="left:-157.644px;width:1000px;text-align:center;top:720.00px;font-size:13.80px;color:#383838;transform-origin:50% 0;transform:scaleX(0.9276);">26</div>
<div class="t" style="left:-88.17199999999997px;width:1000px;text-align:center;top:720.00px;font-size:13.80px;color:#383838;transform-origin:50% 0;transform:scaleX(0.9276);">28</div>
<div class="t" style="left:-18.69999999999999px;width:1000px;text-align:center;top:720.00px;font-size:13.80px;color:#383838;transform-origin:50% 0;transform:scaleX(0.9276);">30</div>
<div class="t" style="left:50.77200000000005px;width:1000px;text-align:center;top:720.00px;font-size:13.80px;color:#383838;transform-origin:50% 0;transform:scaleX(0.9276);">32</div>
<div class="t" style="left:120.24400000000003px;width:1000px;text-align:center;top:720.00px;font-size:13.80px;color:#383838;transform-origin:50% 0;transform:scaleX(0.9276);">34</div>
<div class="t" style="left:189.716px;width:1000px;text-align:center;top:720.00px;font-size:13.80px;color:#383838;transform-origin:50% 0;transform:scaleX(0.9276);">36</div>
<div class="t" style="left:259.188px;width:1000px;text-align:center;top:720.00px;font-size:13.80px;color:#383838;transform-origin:50% 0;transform:scaleX(0.9276);">38</div>
<div class="t" style="left:328.65999999999997px;width:1000px;text-align:center;top:720.00px;font-size:13.80px;color:#383838;transform-origin:50% 0;transform:scaleX(0.9276);">40</div>
<div class="t" style="left:449px;top:744.00px;font-size:19.90px;color:#404040;transform-origin:0 0;transform:scaleX(0.9989);">Wert</div>
<div class="t" style="left:29px;top:528px;font-size:21px;color:#5a5a5a;transform-origin:0 0;transform:rotate(-90deg) scaleX(0.925);">Prozent</div>
<div class="r" style="left:897px;top:213px;width:587px;height:281px;background:#fff;border:1px solid #a8a8a8;box-sizing:border-box"></div>
<div class="r" style="left:898px;top:214px;width:585px;height:33px;background:#efefef"></div>
<div class="r" style="left:898px;top:247px;width:585px;height:28px;background:#f7f7f7"></div>
<div class="r" style="left:898px;top:275px;width:585px;height:1px;background:#b2b2b2"></div>
<div class="t" style="left:1108px;top:219.00px;font-size:21.09px;color:#404040;transform-origin:0 0;transform:scaleX(0.9171);">Zusammenfassung</div>
<div class="r" style="left:925px;top:247px;width:1px;height:28px;background:#a0a0a0"></div>
<div class="r" style="left:1277px;top:250px;width:1px;height:22px;background:#a0a0a0"></div>
<div class="t" style="left:931.3px;top:253.00px;font-size:14.56px;color:#8b8b96;transform-origin:0 0;transform:scaleX(0.9108);">Metrik</div>
<div class="t" style="left:1282.2px;top:253.00px;font-size:14.56px;color:#8b8b96;transform-origin:0 0;transform:scaleX(0.9977);">Wert</div>
<div class="r" style="left:925px;top:276px;width:1px;height:210px;background:#dcdcdc"></div>
<div class="r" style="left:1277px;top:276px;width:1px;height:210px;background:#dcdcdc"></div>
<div class="r" style="left:1278px;top:276px;width:205px;height:26px;background:#e4e4e4"></div>
<div class="r" style="left:926px;top:302px;width:557px;height:1px;background:#dcdcdc"></div>
<div class="t" style="left:931.2px;top:281.00px;font-size:14.56px;color:#404040;transform-origin:0 0;transform:scaleX(0.8274);">n</div>
<div class="t" style="left:1282.9px;top:281.00px;font-size:14.56px;color:#404040;transform-origin:0 0;transform:scaleX(0.9262);">50</div>
<div class="r" style="left:926px;top:328px;width:557px;height:1px;background:#dcdcdc"></div>
<div class="t" style="left:931.2px;top:307.00px;font-size:14.56px;color:#404040;transform-origin:0 0;transform:scaleX(0.9680);">Mittelwert</div>
<div class="t" style="left:1282.9px;top:307.00px;font-size:14.56px;color:#404040;transform-origin:0 0;transform:scaleX(0.9481);">29,9800</div>
<div class="r" style="left:926px;top:354px;width:557px;height:1px;background:#dcdcdc"></div>
<div class="t" style="left:931.2px;top:333.00px;font-size:14.56px;color:#404040;transform-origin:0 0;transform:scaleX(0.9167);">StdAbw</div>
<div class="t" style="left:1282.9px;top:333.00px;font-size:14.56px;color:#404040;transform-origin:0 0;transform:scaleX(0.9633);">3,4434</div>
<div class="r" style="left:926px;top:380px;width:557px;height:1px;background:#dcdcdc"></div>
<div class="t" style="left:931.2px;top:359.00px;font-size:14.56px;color:#404040;transform-origin:0 0;transform:scaleX(0.8433);">Minimum</div>
<div class="t" style="left:1282.9px;top:359.00px;font-size:14.56px;color:#404040;transform-origin:0 0;transform:scaleX(0.9253);">22,0000</div>
<div class="r" style="left:926px;top:406px;width:557px;height:1px;background:#dcdcdc"></div>
<div class="t" style="left:931.2px;top:385.00px;font-size:14.56px;color:#404040;transform-origin:0 0;transform:scaleX(0.8685);">Maximum</div>
<div class="t" style="left:1282.9px;top:385.00px;font-size:14.56px;color:#404040;transform-origin:0 0;transform:scaleX(0.9253);">36,0000</div>
<div class="r" style="left:926px;top:433px;width:557px;height:1px;background:#dcdcdc"></div>
<div class="t" style="left:931.2px;top:412.00px;font-size:14.56px;color:#404040;transform-origin:0 0;transform:scaleX(0.8888);">Alpha</div>
<div class="t" style="left:1282.9px;top:412.00px;font-size:14.56px;color:#404040;transform-origin:0 0;transform:scaleX(0.9331);">0,050</div>
<div class="r" style="left:926px;top:459px;width:557px;height:1px;background:#dcdcdc"></div>
<div class="t" style="left:931.2px;top:438.00px;font-size:14.56px;color:#404040;transform-origin:0 0;transform:scaleX(0.8916);">Schiefe</div>
<div class="t" style="left:1282.9px;top:438.00px;font-size:14.56px;color:#404040;transform-origin:0 0;transform:scaleX(0.9290);">-0,15420</div>
<div class="r" style="left:926px;top:485px;width:557px;height:1px;background:#dcdcdc"></div>
<div class="t" style="left:931.2px;top:464.00px;font-size:14.56px;color:#404040;transform-origin:0 0;transform:scaleX(0.9005);">Kurtosis (Exzess)</div>
<div class="t" style="left:1282.9px;top:464.00px;font-size:14.56px;color:#404040;transform-origin:0 0;transform:scaleX(0.9342);">-0,70921</div>
<svg class="r" style="left:908px;top:284px" width="7" height="10"><path d="M1 0.5 L6 5 L1 9.5 Z" fill="#7a7a7a"/></svg>
<div class="r" style="left:897px;top:499px;width:587px;height:280px;background:#fff;border:1px solid #a8a8a8;box-sizing:border-box"></div>
<div class="r" style="left:898px;top:500px;width:585px;height:34px;background:#efefef"></div>
<div class="r" style="left:898px;top:534px;width:585px;height:27px;background:#f7f7f7"></div>
<div class="r" style="left:898px;top:561px;width:585px;height:1px;background:#b2b2b2"></div>
<div class="r" style="left:898px;top:562px;width:585px;height:1px;background:#e6e6e6"></div>
<div class="t" style="left:1119.3px;top:504.00px;font-size:21.62px;color:#404040;transform-origin:0 0;transform:scaleX(0.8898);">Anpassungsgüte</div>
<div class="r" style="left:925px;top:534px;width:1px;height:27px;background:#a0a0a0"></div>
<div class="r" style="left:1053px;top:536px;width:1px;height:23px;background:#a0a0a0"></div>
<div class="r" style="left:1135px;top:536px;width:1px;height:23px;background:#a0a0a0"></div>
<div class="r" style="left:1213px;top:536px;width:1px;height:23px;background:#a0a0a0"></div>
<div class="r" style="left:1339px;top:536px;width:1px;height:23px;background:#a0a0a0"></div>
<div class="t" style="left:931.4px;top:539.00px;font-size:14.56px;color:#8b8b96;transform-origin:0 0;transform:scaleX(0.9812);">Test</div>
<div class="t" style="left:1058.7px;top:539.00px;font-size:14.56px;color:#8b8b96;transform-origin:0 0;transform:scaleX(0.9279);">Statistik</div>
<div class="t" style="left:1141.5px;top:539.00px;font-size:14.56px;color:#8b8b96;transform-origin:0 0;transform:scaleX(0.9765);">p-Wert</div>
<div class="t" style="left:1218.7px;top:539.00px;font-size:14.56px;color:#8b8b96;transform-origin:0 0;transform:scaleX(0.9660);">H<span style="font-size:9.5px">0</span> verwerfen?</div>
<div class="t" style="left:1345px;top:539.00px;font-size:14.56px;color:#8b8b96;transform-origin:0 0;transform:scaleX(0.8671);">Hinweis</div>
<div class="r" style="left:1054px;top:562px;width:429px;height:26px;background:#e4e4e4"></div>
<div class="r" style="left:925px;top:562px;width:1px;height:26px;background:#dcdcdc"></div>
<div class="r" style="left:1053px;top:562px;width:1px;height:26px;background:#d4d4d4"></div>
<div class="r" style="left:1135px;top:562px;width:1px;height:26px;background:#d4d4d4"></div>
<div class="r" style="left:1213px;top:562px;width:1px;height:26px;background:#d4d4d4"></div>
<div class="r" style="left:1339px;top:562px;width:1px;height:26px;background:#d4d4d4"></div>
<div class="r" style="left:926px;top:588px;width:557px;height:1px;background:#dcdcdc"></div>
<div class="t" style="left:931px;top:567.00px;font-size:14.78px;color:#404040;transform-origin:0 0;transform:scaleX(0.8957);">Anderson–Darling</div>
<div class="t" style="right:370.70000000000005px;top:567.00px;font-size:14.56px;color:#404040;transform-origin:100% 0;transform:scaleX(0.9386);">0,365530</div>
<div class="t" style="right:292.4000000000001px;top:567.00px;font-size:14.56px;color:#404040;transform-origin:100% 0;transform:scaleX(0.9633);">0,422</div>
<div class="t" style="left:1263.7px;top:567.00px;font-size:14.56px;color:#404040;transform-origin:0 0;transform:scaleX(0.8549);">Nein</div>
<div class="t" style="left:1344.8px;top:567.00px;font-size:14.56px;color:#404040;transform-origin:0 0;transform:scaleX(0.9470);">H<span style="font-size:9.5px">0</span>: Daten ~ Normal</div>
<svg class="r" style="left:908px;top:570px" width="7" height="10"><path d="M1 0.5 L6 5 L1 9.5 Z" fill="#7a7a7a"/></svg>
<div class="t" style="left:5.7px;top:801.00px;font-size:13.73px;color:#404040;transform-origin:0 0;transform:scaleX(0.9630);">Spaltenanzahl</div>
<div class="r" style="left:93px;top:797px;width:62px;height:24px;background:#fff;border:1px solid #b4b4b4;box-sizing:border-box"></div>
<div class="t" style="right:1371.5px;top:802.00px;font-size:13.00px;color:#404040;transform-origin:100% 0;">1</div>
<svg class="r" style="left:141px;top:801px" width="8" height="16"><path d="M0.5 4.5 L3.75 1 L7 4.5 Z M0.5 11.5 H7 L3.75 15 Z" fill="#777"/></svg>
<svg class="r" style="left:1366px;top:800px" width="12" height="18" viewBox="0 0 12 18">
<path d="M6 0.3 C9.3 0.3 11.3 2.6 11.3 5.4 C11.3 8 9 9.3 8.6 12 H3.4 C3 9.3 0.7 8 0.7 5.4 C0.7 2.6 2.7 0.3 6 0.3 Z" fill="#f7962e"/>
<rect x="3.2" y="12.8" width="5.6" height="1.3" fill="#555"/>
<path d="M3.2 15 H8.8 L6 17.6 Z" fill="#555"/>
</svg>
<div class="t" style="left:1387.7px;top:802.00px;font-size:13.55px;color:#404040;transform-origin:0 0;transform:scaleX(0.9510);">Bemerkungen</div>
<svg class="r" style="left:1481px;top:804px" width="14" height="14" viewBox="0 0 14 14" fill="#b8b8b8">
<rect x="11" y="0.5" width="2" height="2"/><rect x="11" y="6" width="2" height="2"/><rect x="6" y="6" width="2" height="2"/>
<rect x="11" y="10.5" width="2" height="2"/><rect x="6" y="10.5" width="2" height="2"/><rect x="1" y="10.5" width="2" height="2"/>
</svg>
</body></html>
